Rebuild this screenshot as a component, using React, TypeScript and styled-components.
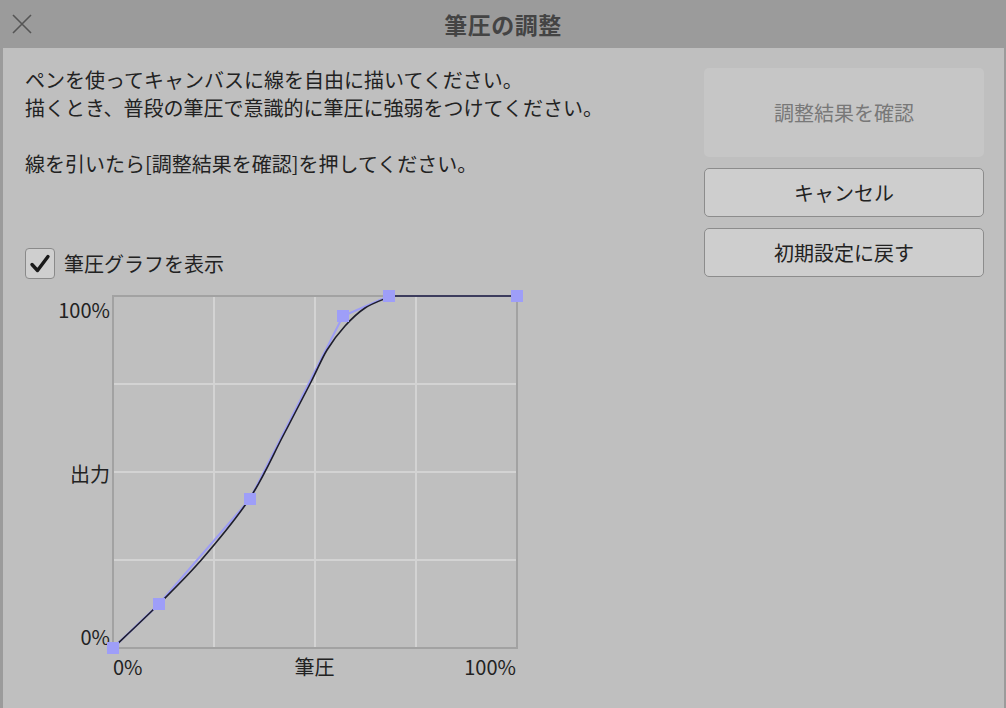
import React from "react";
import styled, { createGlobalStyle } from "styled-components";

const GlobalStyle = createGlobalStyle`
  html, body {
    margin: 0;
    padding: 0;
    background: #9b9b9b;
  }
  body {
    font-family: "Noto Sans CJK JP", "Noto Sans", sans-serif;
    color: #222;
  }
`;

const Window = styled.div`
  display: flex;
  flex-direction: column;
  min-height: 100vh;
  width: 1006px;
`;

const TitleBar = styled.div`
  position: relative;
  height: 48px;
  display: flex;
  align-items: center;
  justify-content: center;
  background: #9b9b9b;
`;

const Title = styled.h1`
  margin: 0;
  font-size: 23px;
  font-weight: 700;
  color: #444;
  letter-spacing: 0.5px;
`;

const CloseButton = styled.button`
  position: absolute;
  left: 11px;
  top: 13px;
  width: 22px;
  height: 22px;
  padding: 0;
  border: none;
  background: none;
  display: flex;
  align-items: center;
  justify-content: center;
`;

const Panel = styled.div`
  flex: 1;
  display: flex;
  margin: 0 2px 0 3px;
  background: #bfbfbf;
`;

const LeftColumn = styled.div`
  flex: 1;
  padding: 18px 0 0 22px;
`;

const Instructions = styled.p`
  margin: 0;
  font-size: 20px;
  line-height: 28px;
  color: #222;
  white-space: pre-line;
`;

const CheckRow = styled.label`
  display: flex;
  align-items: center;
  gap: 9px;
  margin-top: 70px;
  height: 31px;
  font-size: 20px;
  color: #222;
`;

const CheckBox = styled.span`
  width: 28px;
  height: 29px;
  border: 1px solid #8a8a8a;
  border-radius: 4px;
  background: #cfcfcf;
  display: flex;
  align-items: center;
  justify-content: center;
`;

const GraphArea = styled.div`
  display: grid;
  grid-template-columns: 87px 406px;
  grid-template-rows: 353px auto;
  margin-top: 17px;
`;

const YLabels = styled.div`
  display: flex;
  flex-direction: column;
  justify-content: space-between;
  align-items: flex-end;
  padding: 2px 2px 0 0;
  font-size: 20px;
  line-height: 24px;
  color: #222;
`;

const XLabels = styled.div`
  grid-column: 2;
  display: grid;
  grid-template-columns: 1fr auto 1fr;
  padding: 6px 2px 0 1px;
  font-size: 20px;
  line-height: 24px;
  color: #222;
`;

const XLabel = styled.span<{ $align: "start" | "center" | "end" }>`
  justify-self: ${(p) => p.$align};
`;

const Chart = styled.svg`
  display: block;
  overflow: visible;
`;

const RightColumn = styled.div`
  width: 280px;
  display: flex;
  flex-direction: column;
  gap: 11px;
  padding: 20px 20px 0 0;
`;

const Button = styled.button<{ $tall?: boolean; $disabled?: boolean }>`
  height: ${(p) => (p.$tall ? "89px" : "49px")};
  border-radius: 5px;
  border: 1px solid ${(p) => (p.$disabled ? "transparent" : "#8c8c8c")};
  background: ${(p) => (p.$disabled ? "#c6c6c6" : "#cecece")};
  color: ${(p) => (p.$disabled ? "#787878" : "#222")};
  font-family: inherit;
  font-size: 20px;
  padding: 0;
`;

const W = 404;
const H = 352;

// control points of the pressure curve, in graph pixels (origin top-left)
const controlPoints: [number, number][] = [
  [0, 352],
  [46, 308],
  [137, 203],
  [230, 20],
  [276, 0],
  [404, 0],
];

// points the smoothed curve goes through
const curveSamples: [number, number][] = [
  [0, 352],
  [46, 308],
  [90, 262],
  [137, 202],
  [170, 140],
  [198, 86],
  [214, 54],
  [232, 30],
  [252, 12],
  [276, 1],
  [278, 0],
];

function smoothPath(pts: [number, number][]) {
  let d = `M${pts[0][0]},${pts[0][1]}`;
  for (let i = 0; i < pts.length - 1; i++) {
    const p0 = pts[i - 1] || pts[i];
    const p1 = pts[i];
    const p2 = pts[i + 1];
    const p3 = pts[i + 2] || p2;
    const c1x = p1[0] + (p2[0] - p0[0]) / 6;
    const c1y = p1[1] + (p2[1] - p0[1]) / 6;
    const c2x = p2[0] - (p3[0] - p1[0]) / 6;
    const c2y = p2[1] - (p3[1] - p1[1]) / 6;
    d += ` C${c1x},${c1y} ${c2x},${c2y} ${p2[0]},${p2[1]}`;
  }
  return d + ` L${W},0`;
}

const PressureGraph = () => (
  <Chart width={W + 2} height={H + 1} viewBox={`-1 0 ${W + 2} ${H + 1}`}>
    {[1, 2, 3].map((i) => (
      <line
        key={`v${i}`}
        x1={(W / 4) * i}
        x2={(W / 4) * i}
        y1={0}
        y2={H}
        stroke="#d3d3d3"
        strokeWidth={2}
      />
    ))}
    {[1, 2, 3].map((i) => (
      <line
        key={`h${i}`}
        x1={0}
        x2={W}
        y1={(H / 4) * i}
        y2={(H / 4) * i}
        stroke="#d3d3d3"
        strokeWidth={2}
      />
    ))}
    <rect x={0} y={0} width={W} height={H} fill="none" stroke="#a2a2a2" strokeWidth={2} />
    <polyline
      points={controlPoints.map((p) => p.join(",")).join(" ")}
      fill="none"
      stroke="#9d9df6"
      strokeWidth={2}
    />
    <path d={smoothPath(curveSamples)} fill="none" stroke="#1d1d2b" strokeWidth={1.6} />
    {controlPoints.map(([x, y], i) => (
      <rect key={i} x={x - 6} y={y - 6} width={12} height={12} fill="#9e9ef8" />
    ))}
  </Chart>
);

export default function App() {
  return (
    <>
      <GlobalStyle />
      <Window>
        <TitleBar>
          <CloseButton aria-label="閉じる">
            <svg width="20" height="20" viewBox="0 0 20 20">
              <path d="M1 1 L19 19 M19 1 L1 19" stroke="#555" strokeWidth="1.6" fill="none" />
            </svg>
          </CloseButton>
          <Title>筆圧の調整</Title>
        </TitleBar>
        <Panel>
          <LeftColumn>
            <Instructions>
              {"ペンを使ってキャンバスに線を自由に描いてください。\n描くとき、普段の筆圧で意識的に筆圧に強弱をつけてください。\n\n線を引いたら[調整結果を確認]を押してください。"}
            </Instructions>
            <CheckRow>
              <CheckBox>
                <svg width="22" height="22" viewBox="0 0 22 22">
                  <path
                    d="M3 11.5 L8.5 17.5 L19 3.5"
                    stroke="#1a1a1a"
                    strokeWidth="3.4"
                    fill="none"
                    strokeLinecap="round"
                    strokeLinejoin="round"
                  />
                </svg>
              </CheckBox>
              筆圧グラフを表示
            </CheckRow>
            <GraphArea>
              <YLabels>
                <span>100%</span>
                <span>出力</span>
                <span>0%</span>
              </YLabels>
              <PressureGraph />
              <XLabels>
                <XLabel $align="start">0%</XLabel>
                <XLabel $align="center">筆圧</XLabel>
                <XLabel $align="end">100%</XLabel>
              </XLabels>
            </GraphArea>
          </LeftColumn>
          <RightColumn>
            <Button $tall $disabled>
              調整結果を確認
            </Button>
            <Button>キャンセル</Button>
            <Button>初期設定に戻す</Button>
          </RightColumn>
        </Panel>
      </Window>
    </>
  );
}
